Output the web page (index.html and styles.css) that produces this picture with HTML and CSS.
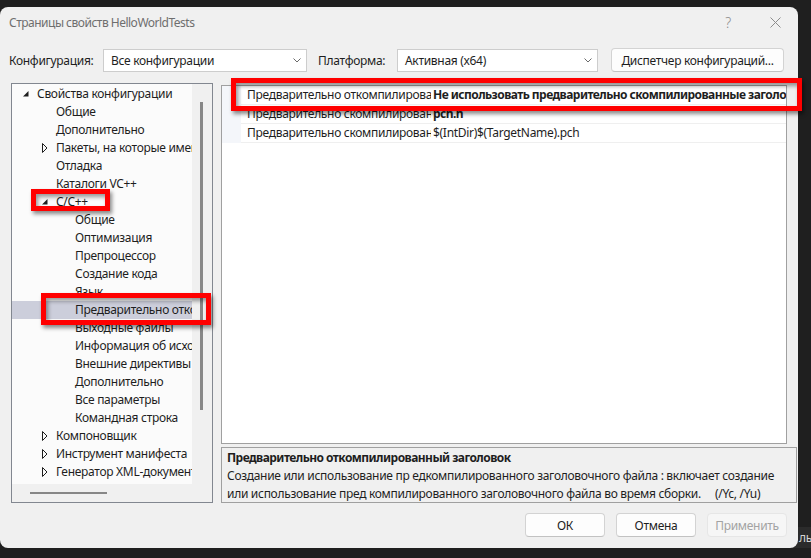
FILE: index.html
```html
<!DOCTYPE html>
<html>
<head>
  <meta charset="utf-8">
  <!-- Style for the property pages dialog -->
  <link rel="stylesheet" href="styles.css">
</head>

<body>

  <!-- Status bar of the window behind the dialog -->
  <div class="behind-bar">ль</div>

  <div class="dialog">

    <!-- Title bar with help and close buttons -->
    <div class="titlebar">
      <span class="title">Страницы свойств HelloWorldTests</span>
      <span class="help">?</span>
      <svg class="close" width="11" height="11" viewBox="0 0 11 11">
        <path d="M0.5 0.5 L10.5 10.5 M10.5 0.5 L0.5 10.5" stroke="#8c8c8c" stroke-width="1" fill="none"/>
      </svg>
    </div>

    <!-- Configuration / platform pickers -->
    <div class="config-row">
      <span class="config-label label-config">Конфигурация:</span>
      <div class="combo combo-config">
        <span>Все конфигурации</span>
        <svg class="chevron" width="8" height="5" viewBox="0 0 8 5"><path d="M0.5 0.5 L4 4 L7.5 0.5" stroke="#6a6a6a" fill="none"/></svg>
      </div>
      <span class="config-label label-platform">Платформа:</span>
      <div class="combo combo-platform">
        <span>Активная (x64)</span>
        <svg class="chevron" width="8" height="5" viewBox="0 0 8 5"><path d="M0.5 0.5 L4 4 L7.5 0.5" stroke="#6a6a6a" fill="none"/></svg>
      </div>
      <button class="btn btn-manager">Диспетчер конфигураций...</button>
    </div>

    <div class="main">

      <!-- Page tree on the left -->
      <div class="tree-box">
        <div class="tree-view">
          <ul class="tree">
            <li class="lvl0"><span class="exp"><svg width="8" height="8" viewBox="0 0 8 8"><polygon points="6.5,1 6.5,6.5 1,6.5" fill="#1e1e1e"/></svg></span>Свойства конфигурации</li>
            <li class="lvl1"><span class="exp"></span>Общие</li>
            <li class="lvl1"><span class="exp"></span>Дополнительно</li>
            <li class="lvl1"><span class="exp"><svg width="8" height="10" viewBox="0 0 8 10"><polygon points="1.5,0.5 6,5 1.5,9.5" fill="none" stroke="#1e1e1e"/></svg></span>Пакеты, на которые имеются ссылки</li>
            <li class="lvl1"><span class="exp"></span>Отладка</li>
            <li class="lvl1"><span class="exp"></span>Каталоги VC++</li>
            <li class="lvl1"><span class="exp"><svg width="8" height="8" viewBox="0 0 8 8"><polygon points="6.5,1 6.5,6.5 1,6.5" fill="#1e1e1e"/></svg></span>C/C++</li>
            <li class="lvl2"><span class="exp"></span>Общие</li>
            <li class="lvl2"><span class="exp"></span>Оптимизация</li>
            <li class="lvl2"><span class="exp"></span>Препроцессор</li>
            <li class="lvl2"><span class="exp"></span>Создание кода</li>
            <li class="lvl2"><span class="exp"></span>Язык</li>
            <li class="lvl2 selected"><span class="exp"></span>Предварительно откомпилированные заголовки</li>
            <li class="lvl2"><span class="exp"></span>Выходные файлы</li>
            <li class="lvl2"><span class="exp"></span>Информация об исходных файлах</li>
            <li class="lvl2"><span class="exp"></span>Внешние директивы include</li>
            <li class="lvl2"><span class="exp"></span>Дополнительно</li>
            <li class="lvl2"><span class="exp"></span>Все параметры</li>
            <li class="lvl2"><span class="exp"></span>Командная строка</li>
            <li class="lvl1"><span class="exp"><svg width="8" height="10" viewBox="0 0 8 10"><polygon points="1.5,0.5 6,5 1.5,9.5" fill="none" stroke="#1e1e1e"/></svg></span>Компоновщик</li>
            <li class="lvl1"><span class="exp"><svg width="8" height="10" viewBox="0 0 8 10"><polygon points="1.5,0.5 6,5 1.5,9.5" fill="none" stroke="#1e1e1e"/></svg></span>Инструмент манифеста</li>
            <li class="lvl1"><span class="exp"><svg width="8" height="10" viewBox="0 0 8 10"><polygon points="1.5,0.5 6,5 1.5,9.5" fill="none" stroke="#1e1e1e"/></svg></span>Генератор XML-документов</li>
          </ul>
          <div class="vscroll"><div class="vthumb"></div></div>
        </div>
        <div class="hscroll"><div class="hthumb"></div></div>
      </div>

      <div class="right-col">
        <!-- Property grid -->
        <div class="grid">
          <div class="grid-row">
            <div class="gutter"></div>
            <div class="cell name">Предварительно откомпилированный заголовок</div>
            <div class="cell value bold">Не использовать предварительно скомпилированные заголовки</div>
          </div>
          <div class="grid-row">
            <div class="gutter"></div>
            <div class="cell name">Предварительно скомпилированный заголовочный файл</div>
            <div class="cell value bold">pch.h</div>
          </div>
          <div class="grid-row">
            <div class="gutter"></div>
            <div class="cell name">Предварительно скомпилированный выходной файл</div>
            <div class="cell value">$(IntDir)$(TargetName).pch</div>
          </div>
        </div>

        <!-- Description of the selected property -->
        <div class="desc">
          <div class="desc-title">Предварительно откомпилированный заголовок</div>
          <div class="desc-line">Создание или использование пр едкомпилированного заголовочного файла : включает создание</div>
          <div class="desc-line">или использование пред компилированного заголовочного файла во время сборки.     (/Yc, /Yu)</div>
        </div>
      </div>
    </div>

    <!-- Dialog buttons -->
    <div class="footer">
      <button class="btn btn-footer">ОК</button>
      <button class="btn btn-footer">Отмена</button>
      <button class="btn btn-footer" disabled>Применить</button>
    </div>

    <!-- Red callout frames drawn over the dialog -->
    <div class="callout callout-cpp"></div>
    <div class="callout callout-page"></div>
    <div class="callout callout-prop"></div>
  </div>

</body>
</html>
```

FILE: styles.css
```css
/* Dark desktop behind the dialog */
body {
  margin: 0;
  height: 558px;
  overflow: hidden;
  position: relative;
  background: #1f1f1f;
  font-family: "Noto Sans", "Liberation Sans", sans-serif;
  font-size: 12px;
  letter-spacing: -0.3px;
  color: #1e1e1e;
}

/* Status bar strip of the window underneath */
.behind-bar {
  position: absolute;
  left: 780px;
  top: 527px;
  width: 40px;
  height: 21px;
  background: #2b2b2b;
  color: #d4d4d4;
  line-height: 21px;
  padding-left: 19px;
  box-sizing: border-box;
}

/* The dialog window */
.dialog {
  position: relative;
  width: 798px;
  height: 541px;
  margin-top: 7px;
  background: #f0f0f0;
  border-radius: 8px;
  box-sizing: border-box;
}

.titlebar {
  height: 31px;
  display: flex;
  align-items: center;
  padding-left: 9px;
}

.title {
  color: #6e6e6e;
  letter-spacing: -0.5px;
  flex: 1;
}

.help {
  color: #8c8c8c;
  font-size: 14px;
  font-weight: 300;
  margin-right: 39px;
}

.close {
  margin-right: 17px;
}

/* Configuration row */
.config-row {
  display: flex;
  align-items: center;
  margin-top: 10px;
  height: 24px;
  padding-left: 9px;
}

.label-config {
  width: 94px;
}

.label-platform {
  width: 79px;
}

.combo {
  height: 23px;
  box-sizing: border-box;
  border: 1px solid #cdcdcd;
  background: #fff;
  display: flex;
  align-items: center;
  justify-content: space-between;
  padding: 0 5px 0 7px;
}

.combo-config {
  width: 204px;
  margin-right: 11px;
}

.combo-platform {
  width: 201px;
  margin-right: 13px;
}

.btn {
  font-family: inherit;
  font-size: 12px;
  letter-spacing: inherit;
  color: #1e1e1e;
  background: #fdfdfd;
  border: 1px solid #d3d3d3;
  border-bottom-color: #c2c2c2;
  border-radius: 4px;
  padding: 0;
  height: 24px;
}

.btn-manager {
  width: 173px;
}

/* Tree and property grid area */
.main {
  display: flex;
  margin-top: 11px;
  padding-left: 11px;
}

.tree-box {
  width: 202px;
  height: 420px;
  box-sizing: border-box;
  border: 1px solid #828790;
}

.tree-view {
  display: flex;
  height: 400px;
}

.tree {
  list-style: none;
  margin: 0;
  padding: 1px 0 0 0;
  width: 180px;
  background: #fbfbfb;
  overflow: hidden;
}

.tree li {
  height: 18px;
  line-height: 18px;
  white-space: nowrap;
  display: flex;
  align-items: center;
}

.tree .lvl0 { padding-left: 8px; }
.tree .lvl1 { padding-left: 27px; }
.tree .lvl2 { padding-left: 46px; }

.tree .selected {
  background: #cccedb;
}

/* Expand / collapse glyph slot */
.exp {
  width: 17px;
  flex: none;
  display: flex;
  align-items: center;
  padding-left: 2px;
  box-sizing: border-box;
}

.vscroll {
  width: 19px;
  padding-top: 18px;
}

.vthumb {
  width: 3px;
  height: 308px;
  margin-left: 8px;
  background: #878787;
}

.hscroll {
  height: 18px;
  display: flex;
  align-items: center;
}

.hthumb {
  width: 77px;
  height: 2px;
  margin-left: 18px;
  background: #878787;
}

.right-col {
  margin-left: 8px;
  margin-top: 2px;
}

.grid {
  width: 566px;
  height: 359px;
  box-sizing: border-box;
  border: 1px solid #a0a0a0;
  background: #fff;
}

.grid-row {
  display: flex;
  height: 19px;
}

.gutter {
  width: 19px;
  background: #f4f6fa;
}

.cell {
  height: 19px;
  line-height: 18px;
  box-sizing: border-box;
  border-bottom: 1px solid #efefef;
  white-space: nowrap;
  overflow: hidden;
}

.name {
  width: 190px;
  padding-left: 6px;
}

.value {
  flex: 1;
  padding-left: 2px;
}

.bold {
  font-weight: bold;
  letter-spacing: -0.55px;
}

.desc {
  width: 576px;
  height: 56px;
  margin-top: 3px;
  box-sizing: border-box;
  border: 1px solid #a0a0a0;
  padding: 1px 0 0 5px;
}

.desc-title {
  font-weight: bold;
  letter-spacing: -0.55px;
  line-height: 18px;
}

.desc-line {
  line-height: 18px;
  white-space: pre;
}

/* Bottom buttons */
.footer {
  display: flex;
  justify-content: flex-end;
  gap: 11px;
  margin-top: 10px;
  padding-right: 11px;
}

.btn-footer {
  width: 80px;
}

.btn-footer:disabled {
  color: #a3a3a3;
  background: #f6f6f6;
  border-color: #e6e6e6;
}

/* Red frames laid over the dialog */
.callout {
  position: absolute;
  border: 5px solid #ff0000;
  box-sizing: border-box;
  box-shadow: 2px 3px 4px rgba(0, 0, 0, 0.45), inset 2px 3px 4px rgba(0, 0, 0, 0.4);
}

.callout-cpp {
  left: 31px;
  top: 182px;
  width: 79px;
  height: 22px;
}

.callout-page {
  left: 41px;
  top: 286px;
  width: 170px;
  height: 32px;
}

.callout-prop {
  left: 231px;
  top: 71px;
  width: 571px;
  height: 33px;
}
```
